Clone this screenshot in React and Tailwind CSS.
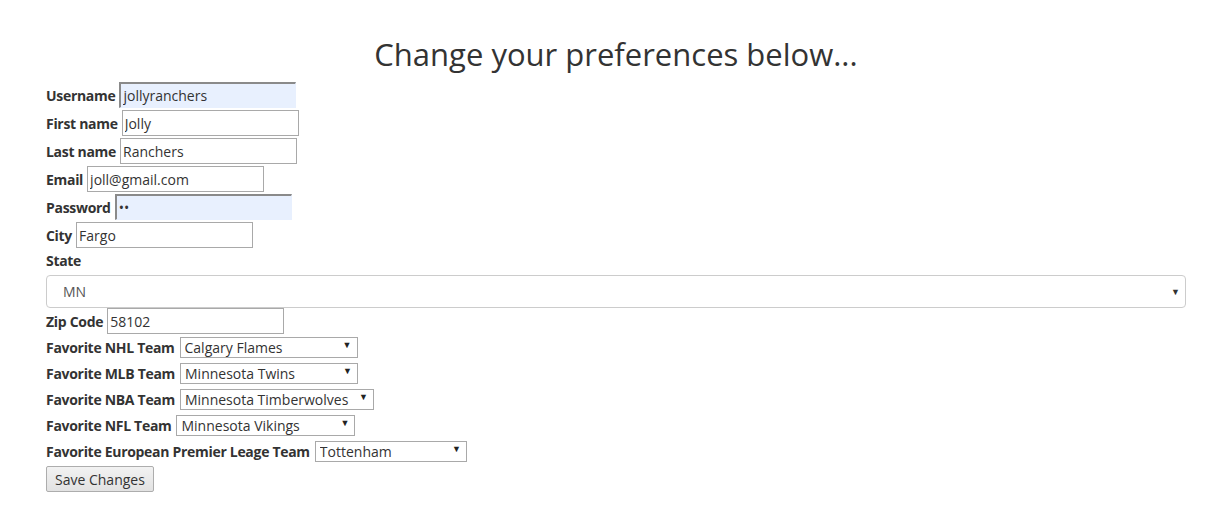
import React from "react";

const font = { fontFamily: '"Open Sans", "Noto Sans", sans-serif' };

const labelCls = "font-bold text-[14px] tracking-[-0.3px]";

const TextRow = ({ label, value, autofill, type = "text", h = "h-[28px]" }) => (
  <div className={"flex items-center " + h}>
    <label className={labelCls + " mr-[4px]"}>{label}</label>
    <input
      type={type}
      defaultValue={value}
      className={
        "w-[177px] h-[26px] px-[2px] text-[14px] text-[#333] outline-none" +
        (autofill
          ? " bg-[#e8f0fe] border-t-2 border-l-2 border-r border-b border-t-[#8a8a8a] border-l-[#8a8a8a] border-r-[#e8f0fe] border-b-[#e8f0fe]"
          : " bg-white border border-[#a9a9a9]")
      }
    />
  </div>
);

const TeamRow = ({ label, value, width }) => (
  <div className="flex items-center h-[26px]">
    <label className={labelCls + " mr-[5px]"}>{label}</label>
    <div className={"relative " + width}>
      <select
        defaultValue={value}
        className="appearance-none w-full h-[21px] border border-[#a9a9a9] bg-white text-[14px] text-[#333] pl-[4px] pr-[18px] leading-[19px] outline-none"
      >
        <option>{value}</option>
      </select>
      <span className="pointer-events-none absolute right-[6px] top-[5px] text-[9px] leading-none text-[#222]">▼</span>
    </div>
  </div>
);

export default function App() {
  return (
    <div style={font} className="min-h-[530px] bg-white text-[#333] pl-[46px] pr-[33px]">
      <h1 className="text-center text-[31px] leading-[33px] pt-[38px] pb-[10px]">Change your preferences below...</h1>
      <div className="flex flex-col">
        <TextRow label="Username" value="jollyranchers" autofill />
        <TextRow label="First name" value="Jolly" />
        <TextRow label="Last name" value="Ranchers" />
        <TextRow label="Email" value="joll@gmail.com" />
        <TextRow label="Password" value="12" type="password" autofill />
        <TextRow label="City" value="Fargo" />
        <div className="flex items-center h-[23px]">
          <label className={labelCls}>State</label>
        </div>
        <div className="relative mt-[3px]">
          <select
            defaultValue="MN"
            className="appearance-none w-full h-[33px] border border-[#ccc] rounded-[4px] bg-white text-[14px] text-[#555] pl-[16px] outline-none"
          >
            <option>MN</option>
          </select>
          <span className="pointer-events-none absolute right-[6px] top-[12px] text-[9px] leading-none text-[#333]">▼</span>
        </div>
        <TextRow label="Zip Code" value="58102" h="h-[26px]" />
        <TeamRow label="Favorite NHL Team" value="Calgary Flames" width="w-[178px]" />
        <TeamRow label="Favorite MLB Team" value="Minnesota Twins" width="w-[178px]" />
        <TeamRow label="Favorite NBA Team" value="Minnesota Timberwolves" width="w-[194px]" />
        <TeamRow label="Favorite NFL Team" value="Minnesota Vikings" width="w-[179px]" />
        <TeamRow label="Favorite European Premier Leage Team" value="Tottenham" width="w-[152px]" />
        <div className="mt-[2px]">
          <button className="h-[26px] px-[8px] text-[14px] text-[#333] border border-[#adadad] rounded-[2px] bg-gradient-to-b from-[#f2f2f2] to-[#e2e2e2]">
            Save Changes
          </button>
        </div>
      </div>
    </div>
  );
}
